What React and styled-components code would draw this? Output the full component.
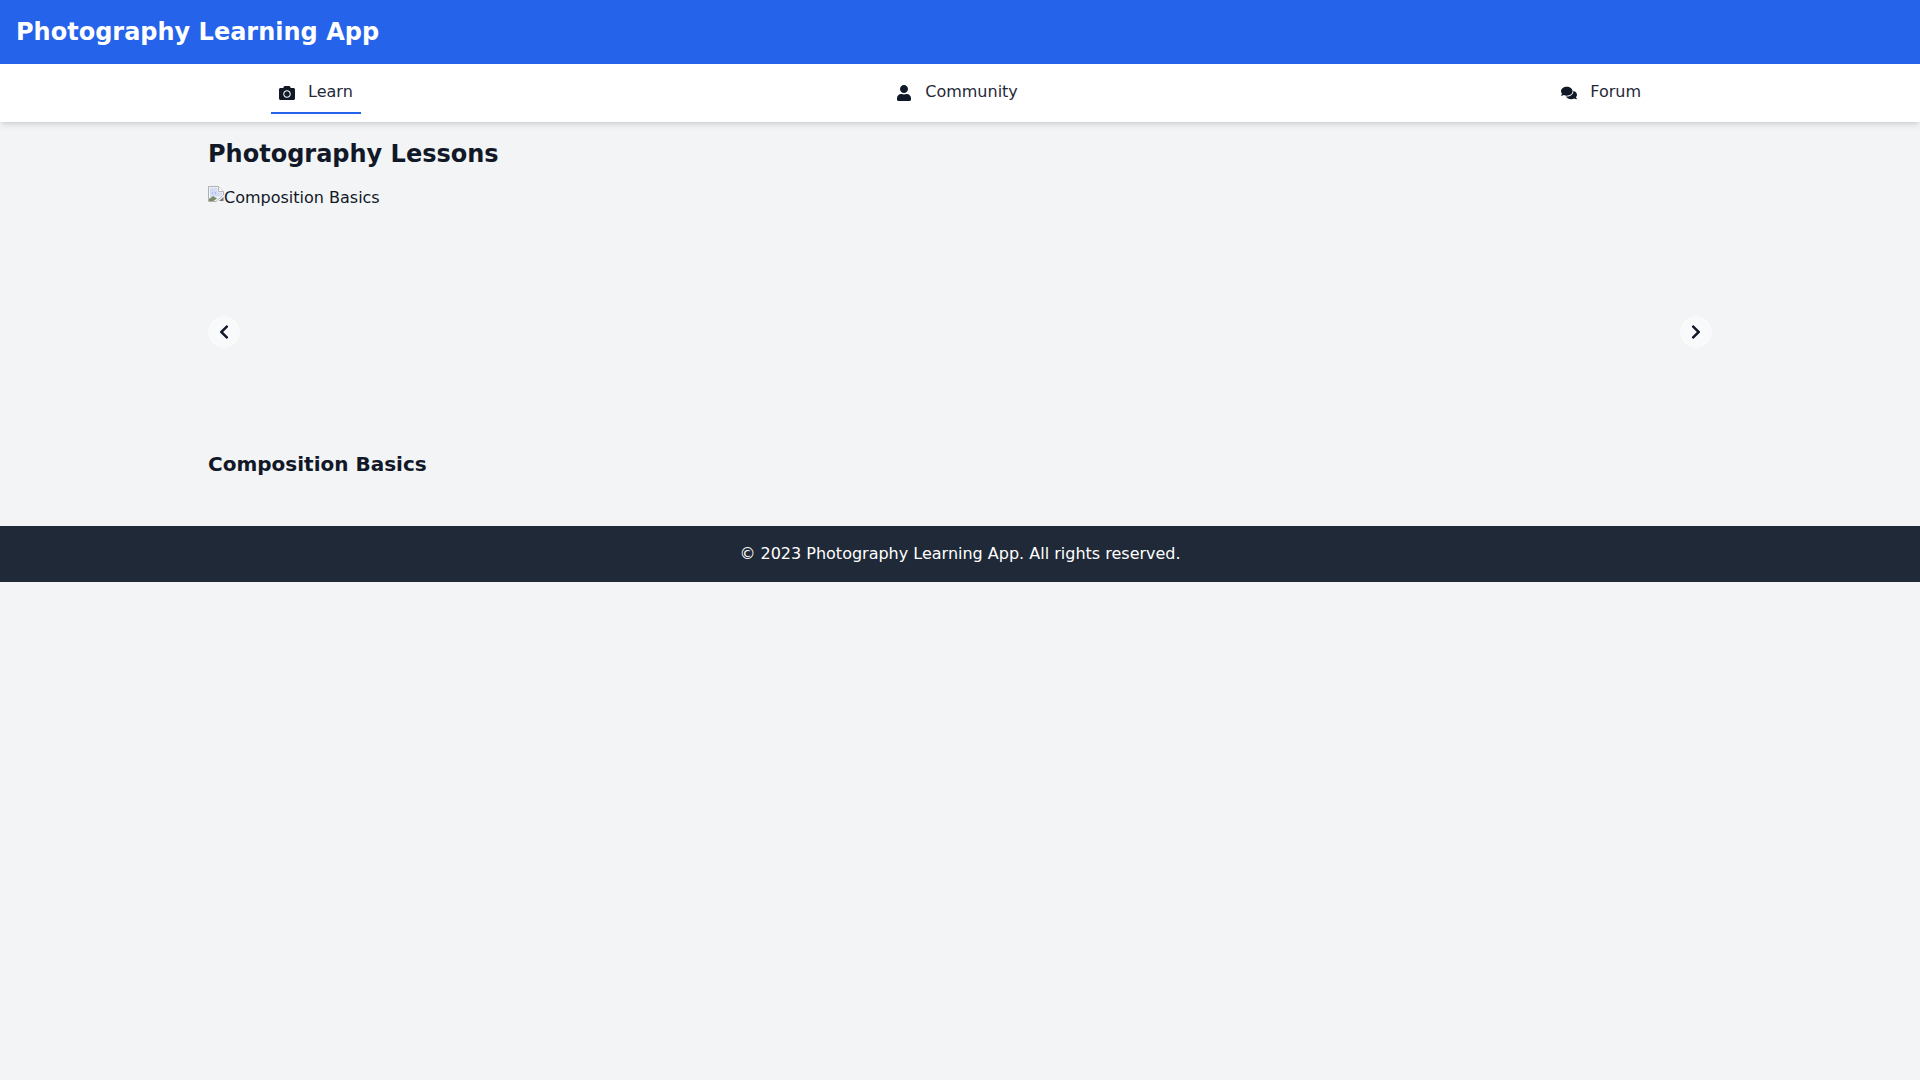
import React from "react";
import styled, { createGlobalStyle } from "styled-components";
import { FaCamera, FaUser, FaComments, FaChevronLeft, FaChevronRight } from "react-icons/fa";

const GlobalStyle = createGlobalStyle`
  * {
    box-sizing: border-box;
  }
  html,
  body {
    margin: 0;
    padding: 0;
  }
  body {
    min-height: 100vh;
    background: #f3f4f6;
    color: #111827;
    font-family: "DejaVu Sans", sans-serif;
    font-size: 16px;
    line-height: 24px;
  }
`;

const Header = styled.header`
  background: #2563eb;
  color: white;
  padding: 16px;
`;

const AppTitle = styled.h1`
  margin: 0;
  font-size: 24px;
  line-height: 32px;
  font-weight: 700;
`;

const NavBar = styled.nav`
  background: white;
  box-shadow: 0 4px 6px -1px rgba(0, 0, 0, 0.1), 0 2px 4px -2px rgba(0, 0, 0, 0.1);
`;

const NavList = styled.ul`
  max-width: 1536px;
  margin: 0 auto;
  padding: 8px 79px;
  list-style: none;
  display: flex;
  justify-content: space-between;
`;

const NavButton = styled.button`
  display: flex;
  align-items: center;
  gap: 13.09px;
  padding: 8px;
  border: 0;
  border-bottom: 2px solid ${({ active }) => (active ? "#2563eb" : "transparent")};
  background: none;
  color: #1f2937;
  font: inherit;
  svg {
    width: 16px;
    height: 16px;
    margin-top: 2px;
    color: #111827;
  }
`;

const Main = styled.main`
  max-width: 1536px;
  margin: 0 auto;
  padding: 16px;
`;

const SectionTitle = styled.h2`
  margin: 0 0 16px;
  font-size: 24px;
  line-height: 32px;
  font-weight: 700;
`;

const Carousel = styled.div`
  position: relative;
  margin-bottom: 32px;
`;

const SlideImage = styled.div`
  height: 256px;
  display: flex;
  align-items: flex-start;
  color: #111827;
`;

const BrokenIcon = styled.svg`
  width: 16px;
  height: 16px;
  flex: none;
`;

const SlideTitle = styled.h3`
  margin: 8px 0 0;
  font-size: 20px;
  line-height: 28px;
  font-weight: 700;
`;

const ArrowButton = styled.button`
  position: absolute;
  top: 50%;
  ${({ side }) => side}: 0;
  transform: translateY(-50%);
  width: 32px;
  height: 32px;
  padding: 0;
  display: flex;
  align-items: center;
  justify-content: center;
  border: 0;
  border-radius: 50%;
  background: rgba(255, 255, 255, 0.5);
  color: #111827;
  svg {
    width: 16px;
    height: 16px;
  }
`;

const Footer = styled.footer`
  background: #1f2937;
  color: white;
  padding: 16px;
  text-align: center;
`;

const tabs = [
  { label: "Learn", Icon: FaCamera, active: true },
  { label: "Community", Icon: FaUser },
  { label: "Forum", Icon: FaComments },
];

function BrokenImageIcon() {
  return (
    <BrokenIcon viewBox="0 0 16 16">
      <path d="M0.5 0.5H10.5L15.5 5.5V9L8 15.5H0.5Z" fill="#eef1f7" stroke="#b0b0b0" />
      <path d="M10.5 0.5V5.5H15.5" fill="#fafafa" stroke="#b8b8b8" />
      <path d="M2 2H9.5V6.5H14V8.5L11 10.5H2Z" fill="#d3dcf4" />
      <path d="M4 6.5H5V7.5H4ZM7 6.5H8V7.5H7Z" fill="#7f95d8" />
      <path d="M1 15V13L5 10L9 12.5L5.5 15Z" fill="#7d8a6c" />
      <path d="M8.5 15.5L15.5 9.5V15.5Z" fill="#f3f4f6" />
      <path d="M11 15L15.5 11V15Z" fill="#777" />
    </BrokenIcon>
  );
}

export default function App() {
  return (
    <>
      <GlobalStyle />
      <Header>
        <AppTitle>Photography Learning App</AppTitle>
      </Header>
      <NavBar>
        <NavList>
          {tabs.map(({ label, Icon, active }) => (
            <li key={label}>
              <NavButton active={active}>
                <Icon />
                {label}
              </NavButton>
            </li>
          ))}
        </NavList>
      </NavBar>
      <Main>
        <SectionTitle>Photography Lessons</SectionTitle>
        <Carousel>
          <SlideImage>
            <BrokenImageIcon />
            Composition Basics
          </SlideImage>
          <SlideTitle>Composition Basics</SlideTitle>
          <ArrowButton side="left">
            <FaChevronLeft />
          </ArrowButton>
          <ArrowButton side="right">
            <FaChevronRight />
          </ArrowButton>
        </Carousel>
      </Main>
      <Footer>© 2023 Photography Learning App. All rights reserved.</Footer>
    </>
  );
}
